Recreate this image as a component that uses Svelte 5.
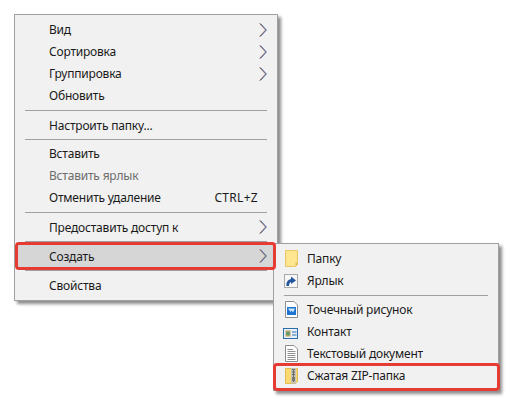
<script>
  const mainItems = [
    { label: "Вид", arrow: true },
    { label: "Сортировка", arrow: true },
    { label: "Группировка", arrow: true },
    { label: "Обновить" },
    { sep: true },
    { label: "Настроить папку...", solo: true },
    { sep: true },
    { label: "Вставить" },
    { label: "Вставить ярлык", disabled: true },
    { label: "Отменить удаление", hint: "CTRL+Z" },
    { sep: true },
    { label: "Предоставить доступ к", arrow: true, solo: true },
    { sep: true },
    { label: "Создать", arrow: true, active: true, solo: true },
    { sep: true },
    { label: "Свойства", solo: true }
  ];

  const subItems = [
    { label: "Папку", icon: "folder" },
    { label: "Ярлык", icon: "shortcut" },
    { sep: true },
    { label: "Точечный рисунок", icon: "bitmap" },
    { label: "Контакт", icon: "contact" },
    { label: "Текстовый документ", icon: "text" },
    { label: "Сжатая ZIP-папка", icon: "zip" }
  ];
</script>

<div class="page">
  <div class="menu main">
    {#each mainItems as item}
      {#if item.sep}
        <div class="sep"></div>
      {:else}
        <div class="row" class:active={item.active} class:disabled={item.disabled} class:solo={item.solo}>
          <span class="label">{item.label}</span>
          {#if item.hint}<span class="hint">{item.hint}</span>{/if}
          {#if item.arrow}
            <svg class="arrow" width="9" height="14" viewBox="0 0 9 14">
              <path d="M.6 .5 L6.6 7 L.6 13.5" fill="none" stroke="#c8683a" stroke-width="1" />
              <path d="M1.4 .5 L7.4 7 L1.4 13.5" fill="none" stroke="#2f68b4" stroke-width="1" />
            </svg>
          {/if}
        </div>
      {/if}
    {/each}
  </div>

  <div class="menu sub">
    {#each subItems as item}
      {#if item.sep}
        <div class="sep"></div>
      {:else}
        <div class="row">
          <span class="icon">
            {#if item.icon === "folder"}
              <svg width="16" height="18" viewBox="0 0 16 18">
                <path d="M2.5 .5H14.5V14.5L12.5 16.5H2.5Z" fill="#fde68f" stroke="#ecc766" />
                <path d="M12.5 16.5V12.5H14.5V14.5Z" fill="#e8bd55" />
              </svg>
            {:else if item.icon === "shortcut"}
              <svg width="16" height="16" viewBox="0 0 16 16">
                <rect x="1.5" y="1.5" width="13" height="13" fill="#f6f6f6" stroke="#a9a9a9" />
                <path d="M3.5 13C3 8.5 5.5 6.5 8 6V3.5L13 7.5L8 11V9C6.5 9.5 6 11 6 13Z" fill="#22559e" />
              </svg>
            {:else if item.icon === "bitmap"}
              <svg width="16" height="18" viewBox="0 0 16 18">
                <path d="M2.5 .5H11L14.5 4V16.5H2.5Z" fill="#fff" stroke="#8d8d8d" />
                <rect x="4" y="6" width="9" height="8" fill="#1c74d0" />
                <path d="M5 7.5H12L10 11.5L8.5 9.5L7.5 11Z" fill="#cfe6fa" />
              </svg>
            {:else if item.icon === "contact"}
              <svg width="18" height="14" viewBox="0 0 18 14">
                <rect x=".5" y="3.5" width="14" height="10" fill="#e6f1fb" stroke="#2d6ea8" />
                <rect x="2.5" y="5.5" width="5" height="6" fill="#c9a55c" />
                <circle cx="5" cy="8.5" r="2" fill="#5f9a78" />
                <path d="M9 7H13.5M9 10H13.5" stroke="#6f9cc6" stroke-width="1.4" />
              </svg>
            {:else if item.icon === "text"}
              <svg width="16" height="18" viewBox="0 0 16 18">
                <path d="M2.5 .5H11L14.5 4V16.5H2.5Z" fill="#fff" stroke="#8d8d8d" />
                <path d="M4.5 4.5H10M4.5 6.5H12.5M4.5 8.5H12.5M4.5 10.5H12.5M4.5 12.5H12.5M4.5 14.5H12.5" stroke="#8f8f8f" />
              </svg>
            {:else if item.icon === "zip"}
              <svg width="16" height="18" viewBox="0 0 16 18">
                <path d="M2.5 1.5H14.5V14.5L12.5 16.5H2.5Z" fill="#fbd96f" stroke="#e3bb55" />
                <rect x="8" y="1" width="5" height="15.5" fill="#c4c4ba" />
                <path d="M10.5 2V15M12 2.5H9M12 5H9M12 7.5H9" stroke="#6d6d64" />
                <rect x="9" y="10" width="3" height="4" fill="#7a7a70" />
              </svg>
            {/if}
          </span>
          <span class="label">{item.label}</span>
        </div>
      {/if}
    {/each}
  </div>

  <div class="mark mark-create"></div>
  <div class="mark mark-zip"></div>
</div>

<style>
  :global(body) {
    background: #fff;
  }

  .page {
    position: relative;
    width: 513px;
    height: 405px;
    overflow: hidden;
    font-family: "Noto Sans", sans-serif;
    font-size: 12px;
    letter-spacing: -0.2px;
    color: #1a1a1a;
  }

  .menu {
    position: absolute;
    box-sizing: border-box;
    background: #f1f1f1;
    border: 1px solid #a0a0a0;
    padding: 4px 2px 3px;
    box-shadow: 3px 3px 3px rgba(0, 0, 0, 0.45);
  }

  .main {
    left: 14px;
    top: 14px;
    width: 264px;
    height: 287px;
  }

  .sub {
    left: 273px;
    top: 243px;
    width: 226px;
    height: 148px;
  }

  .row {
    display: flex;
    align-items: center;
    box-sizing: border-box;
    height: 22px;
    padding-left: 32px;
    padding-bottom: 1px;
    position: relative;
  }

  .row.solo {
    padding-bottom: 0;
  }

  .row.active {
    background: #d6d6d6;
  }

  .row.disabled {
    color: #6d6d6d;
  }

  .hint {
    margin-left: auto;
    padding-right: 17px;
    letter-spacing: 0.3px;
  }

  .arrow {
    position: absolute;
    right: 7px;
    top: 4px;
  }

  .sep {
    height: 1px;
    margin: 3px 8px;
    background: #a0a0a0;
  }

  .sub .row {
    padding-left: 7px;
  }

  .icon {
    width: 24px;
    margin-top: 1px;
    display: flex;
    align-items: center;
    flex: none;
  }

  .mark {
    position: absolute;
    box-sizing: border-box;
    border: 3px solid #e53b33;
    border-radius: 4px;
  }

  .mark-create {
    left: 15px;
    top: 242px;
    width: 261px;
    height: 28px;
  }

  .mark-zip {
    left: 273px;
    top: 363px;
    width: 227px;
    height: 28px;
  }
</style>
